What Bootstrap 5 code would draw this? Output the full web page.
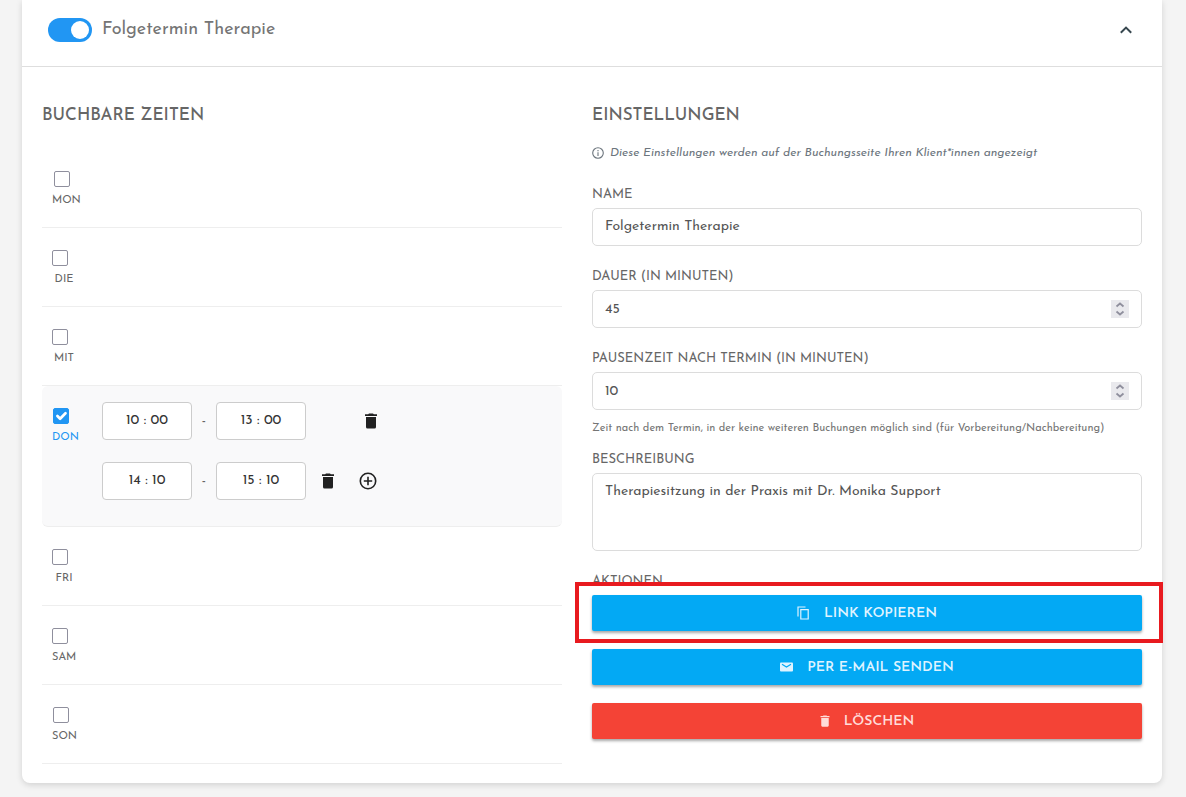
<!DOCTYPE html>
<html lang="de">
<head>
<meta charset="utf-8">
<meta name="viewport" content="width=device-width, initial-scale=1">
<title>Folgetermin Therapie</title>
<link href="https://cdn.jsdelivr.net/npm/bootstrap@5.3.0/dist/css/bootstrap.min.css" rel="stylesheet">
<style>
  body { background: #f4f4f4; color: #666; font-family: "Josefin Sans", Lato, sans-serif; font-size: 14px; }
  .page { padding: 0 24px 14px 22px; }
  .panel { border: 0; border-radius: 0 0 8px 8px; box-shadow: 0 2px 6px rgba(0,0,0,.14); }
  .panel-head { padding: 18px 26px 24px 26px; border-bottom: 1px solid #dedede; }
  .panel-head .form-switch { padding: 0; min-height: 0; gap: 10px; }
  .panel-head .form-check-input { width: 44px; height: 24px; margin: 0; border: 0; }
  .form-check-input:checked { background-color: #2196f3; border-color: #2196f3; }
  .panel-title { font-size: 18px; line-height: 24px; color: #757575; }
  .times { padding: 36px 30px 19px 20px; }
  .settings { padding: 36px 20px 19px 0; }
  h2 { font-size: 17px; line-height: 26px; color: #666; margin: 0; }
  .days { margin-top: 20px; }
  .day { min-height: 79px; padding: 0 10px; border-bottom: 1px solid #eee; }
  .day.active { background: #f9f9fa; border-radius: 6px; padding-bottom: 26px; }
  .day-name { width: 50px; padding-top: 22px; }
  .day-name label { font-size: 11px; line-height: 16px; gap: 6px; }
  .day-name .form-check-input { width: 16px; height: 16px; margin: 0 8px 0 0; border-color: #8f8f9d; border-radius: 2px; }
  .day-name .form-check-input:checked { border-color: #2196f3; background-size: 18px 18px; }
  .day.active label { color: #2196f3; }
  .slots { padding-top: 16px; gap: 22px; }
  .slot-input { width: 90px; height: 38px; border-color: #ccc; border-radius: 4px; color: #333; font-size: 14px; text-align: center; padding: 0 0 2px; }
  .dash { width: 24px; text-align: center; }
  .icon-btn { width: 20px; height: 20px; padding: 0; border: 0; line-height: 1; color: #212121; }
  .icon-btn svg, .action svg, .note svg, .toggle svg { display: block; }
  .slot-tools { margin-left: 12px; gap: 20px; }
  .slot-tools.single { margin-left: 55px; }
  .note { margin-top: 14px; font-size: 12px; line-height: 20px; color: #6c757d; gap: 6px; }
  .caption { display: block; margin: 23px 0 5px; font-size: 13px; line-height: 16px; color: #666; }
  .note + .caption { margin-top: 24px; }
  .hint { margin-top: 11px; font-size: 11px; line-height: 16px; color: #757575; }
  .hint + .caption { margin-top: 15px; }
  .field { height: 38px; padding: 0 12px 2px; border-color: #dcdcdc; border-radius: 5px; font-size: 14px; color: #555; }
  .field[type=number] { padding-bottom: 0; }
  textarea.field { height: 78px; padding-top: 8px; line-height: 20px; resize: none; }
  input[type=number] { appearance: textfield; -moz-appearance: textfield; }
  input[type=number]::-webkit-inner-spin-button { appearance: none; -webkit-appearance: none; margin: 0; }
  .spin { position: absolute; right: 13px; top: 10px; pointer-events: none; }
  .actions { gap: 18px; }
  .action { height: 36px; padding: 0; gap: 14px; border: 0; border-radius: 2px; font-size: 14px; font-weight: 600; color: #dff3ff; background: #03a9f4; box-shadow: 0 2px 3px rgba(0,0,0,.35); }
  .action:hover { color: #fff; background: #039be5; }
  .action.remove { color: #ffdcd9; background: #f44336; }
  .highlight { position: absolute; inset: -13px -21px -12px -17px; border: 4px solid #e81a1f; pointer-events: none; z-index: 2; }
</style>
</head>
<body>
<main class="page">
  <section class="card panel">
    <header class="panel-head d-flex align-items-center justify-content-between">
      <div class="form-check form-switch d-flex align-items-center mb-0">
        <input class="form-check-input" type="checkbox" role="switch" id="active" checked>
        <label class="panel-title" for="active">Folgetermin Therapie</label>
      </div>
      <button type="button" class="btn icon-btn toggle d-flex justify-content-center align-items-center" aria-label="Einklappen">
        <svg width="12" height="8" viewBox="0 0 12 8" fill="none" stroke="#37474f" stroke-width="2"><path d="M.8 6.800 6 1.600l5.200 5.200"/></svg>
      </button>
    </header>
    <div class="row g-0">
      <div class="col-6 times">
        <h2>BUCHBARE ZEITEN</h2>
        <div class="days">
          <div class="day d-flex"><div class="day-name"><label class="d-inline-flex flex-column align-items-center"><input class="form-check-input" type="checkbox">MON</label></div></div>
          <div class="day d-flex"><div class="day-name"><label class="d-inline-flex flex-column align-items-center"><input class="form-check-input" type="checkbox">DIE</label></div></div>
          <div class="day d-flex"><div class="day-name"><label class="d-inline-flex flex-column align-items-center"><input class="form-check-input" type="checkbox">MIT</label></div></div>
          <div class="day d-flex active">
            <div class="day-name"><label class="d-inline-flex flex-column align-items-center"><input class="form-check-input" type="checkbox" checked>DON</label></div>
            <div class="slots d-flex flex-column">
              <div class="d-flex align-items-center">
                <input class="form-control slot-input" type="text" value="10 : 00" aria-label="Von">
                <span class="dash">-</span>
                <input class="form-control slot-input" type="text" value="13 : 00" aria-label="Bis">
                <div class="slot-tools single d-flex">
                  <button type="button" class="btn icon-btn d-flex justify-content-center align-items-center" aria-label="Zeit entfernen"><svg width="12" height="16" viewBox="0 0 12 16" fill="currentColor"><path d="M1 4h10v10q0 1.500-1.500 1.500h-7Q1 15.500 1 14zM0 1.300h3.200L4 .5h4l.8.8H12V3H0z"/></svg></button>
                </div>
              </div>
              <div class="d-flex align-items-center">
                <input class="form-control slot-input" type="text" value="14 : 10" aria-label="Von">
                <span class="dash">-</span>
                <input class="form-control slot-input" type="text" value="15 : 10" aria-label="Bis">
                <div class="slot-tools d-flex">
                  <button type="button" class="btn icon-btn d-flex justify-content-center align-items-center" aria-label="Zeit entfernen"><svg width="12" height="16" viewBox="0 0 12 16" fill="currentColor"><path d="M1 4h10v10q0 1.500-1.500 1.500h-7Q1 15.500 1 14zM0 1.300h3.200L4 .5h4l.8.8H12V3H0z"/></svg></button>
                  <button type="button" class="btn icon-btn d-flex justify-content-center align-items-center" aria-label="Zeit hinzufügen"><svg width="18" height="18" viewBox="0 0 18 18" fill="none" stroke="currentColor" stroke-width="1.600"><circle cx="9" cy="9" r="7.700"/><path d="M9 4.800v8.400M4.800 9h8.400"/></svg></button>
                </div>
              </div>
            </div>
          </div>
          <div class="day d-flex"><div class="day-name"><label class="d-inline-flex flex-column align-items-center"><input class="form-check-input" type="checkbox">FRI</label></div></div>
          <div class="day d-flex"><div class="day-name"><label class="d-inline-flex flex-column align-items-center"><input class="form-check-input" type="checkbox">SAM</label></div></div>
          <div class="day d-flex"><div class="day-name"><label class="d-inline-flex flex-column align-items-center"><input class="form-check-input" type="checkbox">SON</label></div></div>
        </div>
      </div>
      <div class="col-6 settings">
        <h2>EINSTELLUNGEN</h2>
        <div class="note d-flex align-items-center fst-italic">
          <svg width="12" height="12" viewBox="0 0 12 12" fill="none" stroke="currentColor" stroke-width="1.100"><circle cx="6" cy="6" r="5.300"/><path d="M6 5.200V9M6 3v1.200"/></svg>
          <span>Diese Einstellungen werden auf der Buchungsseite Ihren Klient*innen angezeigt</span>
        </div>
        <label class="caption" for="name">NAME</label>
        <input class="form-control field" id="name" type="text" value="Folgetermin Therapie">
        <label class="caption" for="duration">DAUER (IN MINUTEN)</label>
        <div class="position-relative">
          <input class="form-control field" id="duration" type="number" value="45">
          <svg class="spin" width="18" height="18" viewBox="0 0 18 18" fill="none" stroke="#8f8f9d" stroke-width="1.800"><path fill="#e9e9ed" stroke="none" d="M0 0h18v18H0z"/><path d="m5.500 6.500 3.500-3 3.500 3M5.500 11.500l3.500 3 3.500-3"/></svg>
        </div>
        <label class="caption" for="pause">PAUSENZEIT NACH TERMIN (IN MINUTEN)</label>
        <div class="position-relative">
          <input class="form-control field" id="pause" type="number" value="10">
          <svg class="spin" width="18" height="18" viewBox="0 0 18 18" fill="none" stroke="#8f8f9d" stroke-width="1.800"><path fill="#e9e9ed" stroke="none" d="M0 0h18v18H0z"/><path d="m5.500 6.500 3.500-3 3.500 3M5.500 11.500l3.500 3 3.500-3"/></svg>
        </div>
        <div class="hint">Zeit nach dem Termin, in der keine weiteren Buchungen möglich sind (für Vorbereitung/Nachbereitung)</div>
        <label class="caption" for="description">BESCHREIBUNG</label>
        <textarea class="form-control field" id="description">Therapiesitzung in der Praxis mit Dr. Monika Support</textarea>
        <div class="caption">AKTIONEN</div>
        <div class="actions d-grid">
          <div class="position-relative d-grid">
            <button type="button" class="btn action d-flex justify-content-center align-items-center">
              <svg width="13" height="14" viewBox="0 0 13 14" fill="none" stroke="currentColor" stroke-width="1.200"><path d="M1 10.500V1h7.500M3.800 3.600h7.400v9.400H3.800z"/></svg>LINK KOPIEREN
            </button>
            <div class="highlight"></div>
          </div>
          <button type="button" class="btn action d-flex justify-content-center align-items-center">
            <svg width="13" height="10" viewBox="0 0 13 10"><path fill="currentColor" d="M1 .5h11q1 0 1 1v7q0 1-1 1H1q-1 0-1-1v-7q0-1 1-1z"/><path d="m2 2.200 4.500 2.800L11 2.200" fill="none" stroke="#03a9f4" stroke-width="1.200"/></svg>PER E-MAIL SENDEN
          </button>
          <button type="button" class="btn action remove d-flex justify-content-center align-items-center">
            <svg width="10" height="12" viewBox="0 0 12 16" fill="currentColor"><path d="M1 4h10v10q0 1.500-1.500 1.500h-7Q1 15.500 1 14zM0 1.300h3.200L4 .5h4l.8.8H12V3H0z"/></svg>LÖSCHEN
          </button>
        </div>
      </div>
    </div>
  </section>
</main>
<script src="https://cdn.jsdelivr.net/npm/bootstrap@5.3.0/dist/js/bootstrap.bundle.min.js"></script>
</body>
</html>
